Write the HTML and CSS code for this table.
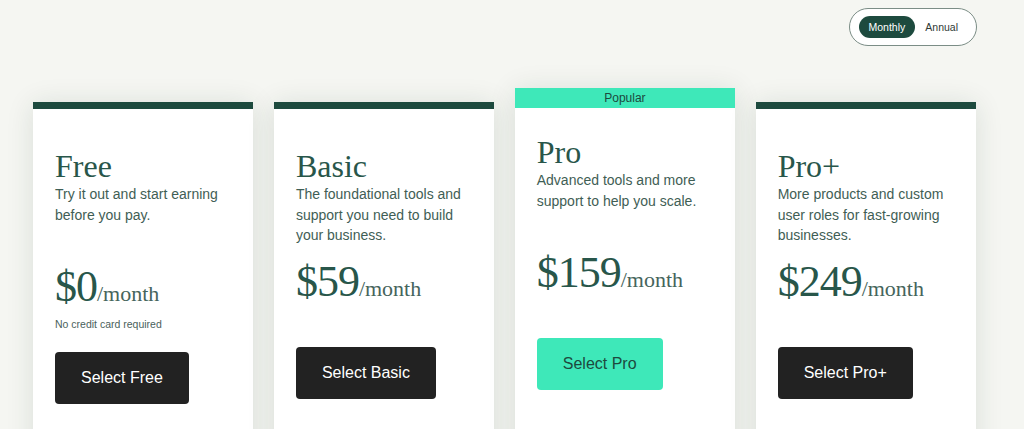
FILE: index.html
```html
<!DOCTYPE html>
<html lang="en">
<head>
<meta charset="utf-8">
<title>Pricing</title>
<link rel="stylesheet" href="styles.css">
</head>
<body>
<div class="page">
  <div class="toolbar">
    <div class="billing-toggle">
      <span class="billing-option billing-option--active">Monthly</span>
      <span class="billing-option">Annual</span>
    </div>
  </div>
  <div class="plans">
    <div class="plan">
      <div class="plan-bar"></div>
      <div class="plan-body">
        <h2 class="plan-name">Free</h2>
        <p class="plan-desc">Try it out and start earning before you pay.</p>
        <div class="plan-price plan-price--low"><span class="plan-amount">$0</span><span class="plan-period">/month</span></div>
        <p class="plan-note">No credit card required</p>
        <a class="plan-btn">Select Free</a>
      </div>
    </div>
    <div class="plan">
      <div class="plan-bar"></div>
      <div class="plan-body">
        <h2 class="plan-name">Basic</h2>
        <p class="plan-desc">The foundational tools and support you need to build your business.</p>
        <div class="plan-price"><span class="plan-amount">$59</span><span class="plan-period">/month</span></div>
        <p class="plan-note"></p>
        <a class="plan-btn">Select Basic</a>
      </div>
    </div>
    <div class="plan plan--popular">
      <div class="plan-bar plan-bar--popular">Popular</div>
      <div class="plan-body">
        <h2 class="plan-name">Pro</h2>
        <p class="plan-desc">Advanced tools and more support to help you scale.</p>
        <div class="plan-price plan-price--low"><span class="plan-amount">$159</span><span class="plan-period">/month</span></div>
        <p class="plan-note"></p>
        <a class="plan-btn plan-btn--accent">Select Pro</a>
      </div>
    </div>
    <div class="plan">
      <div class="plan-bar"></div>
      <div class="plan-body">
        <h2 class="plan-name">Pro+</h2>
        <p class="plan-desc">More products and custom user roles for fast-growing businesses.</p>
        <div class="plan-price"><span class="plan-amount">$249</span><span class="plan-period">/month</span></div>
        <p class="plan-note"></p>
        <a class="plan-btn">Select Pro+</a>
      </div>
    </div>
  </div>
</div>
</body>
</html>
```

FILE: styles.css
```css
html, body {
  margin: 0;
  padding: 0;
  overflow: hidden;
  background: #f5f6f2;
}

body {
  font-family: "Liberation Sans", Arial, sans-serif;
  color: #3d5c53;
}

.page {
  width: 944px;
  margin-left: 33px;
  padding-top: 8px;
}

.toolbar {
  display: flex;
  justify-content: flex-end;
}

.billing-toggle {
  display: flex;
  align-items: center;
  border: 1px solid #7b8d86;
  border-radius: 999px;
  background: #ffffff;
  padding: 7px 8px 7px 9px;
}

.billing-option {
  display: flex;
  align-items: center;
  height: 22px;
  padding: 0 10px;
  border-radius: 999px;
  font-size: 10.5px;
  color: #2f3a36;
}

.billing-option--active {
  background: #1d4a3e;
  color: #ffffff;
}

.plans {
  display: flex;
  align-items: flex-start;
  gap: 20.5px;
  margin-top: 56px;
  margin-right: 1px;
}

.plan {
  flex: 1 1 0;
  background: #ffffff;
  box-shadow: 0 2px 26px rgba(22, 60, 45, 0.12);
}

.plan--popular {
  margin-top: -14px;
}

.plan-bar {
  height: 7px;
  background: #1d4a3e;
}

.plan-bar--popular {
  height: 20px;
  background: #3ee8b9;
  color: #1d4a3e;
  font-size: 12px;
  line-height: 20px;
  text-align: center;
}

.plan-body {
  padding: 39px 22px 80px;
}

.plan--popular .plan-body {
  padding-top: 26px;
}

.plan-name {
  margin: 0;
  font-family: "Liberation Serif", "Times New Roman", serif;
  font-weight: 400;
  font-size: 32px;
  line-height: 36px;
  color: #28564a;
}

.plan-desc {
  margin: 0;
  font-size: 14px;
  line-height: 20.5px;
  color: #3f5e55;
}

.plan-price {
  margin-top: 12px;
  font-family: "Liberation Serif", "Times New Roman", serif;
  line-height: 48px;
  height: 48px;
  white-space: nowrap;
}

.plan-price--low {
  margin-top: 38px;
}

.plan-amount {
  font-size: 44px;
  letter-spacing: -1px;
  color: #28564a;
}

.plan-period {
  font-size: 22px;
  color: #46655c;
}

.plan-note {
  margin: 5px 0 0;
  height: 16px;
  font-size: 10.5px;
  line-height: 16px;
  color: #4a625c;
}

.plan-btn {
  display: inline-flex;
  align-items: center;
  justify-content: center;
  height: 52px;
  margin-top: 20px;
  padding: 0 26px;
  border-radius: 4px;
  background: #222222;
  color: #ffffff;
  font-size: 16px;
  text-decoration: none;
}

.plan-btn--accent {
  background: #3ee8b9;
  color: #1d4a3e;
}
```
